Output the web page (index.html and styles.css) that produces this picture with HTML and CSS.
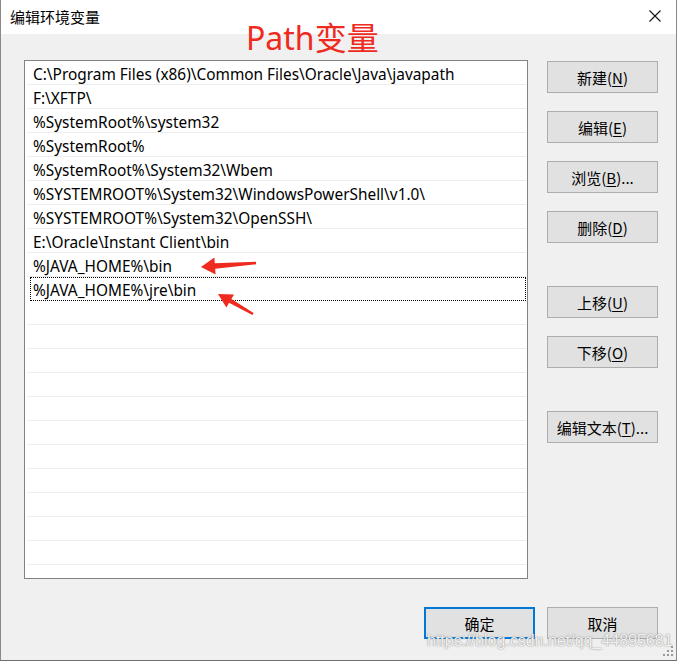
FILE: index.html
```html
<!DOCTYPE html>
<html lang="zh-CN">
<head>
<meta charset="utf-8">
<title>编辑环境变量</title>
<link rel="stylesheet" href="styles.css">
</head>
<body>
<div class="window">
  <div class="titlebar">
    <span class="title">编辑环境变量</span>
    <span class="close" aria-label="关闭">
      <svg width="12" height="12" viewBox="0 0 12 12"><path d="M0.5 0.5 L11.5 11.5 M11.5 0.5 L0.5 11.5" stroke="#111" stroke-width="1.1" fill="none"/></svg>
    </span>
  </div>
  <div class="content">
    <div class="main">
      <div class="listbox">
        <div class="row">C:\Program Files (x86)\Common Files\Oracle\Java\javapath</div>
        <div class="row">F:\XFTP\</div>
        <div class="row">%SystemRoot%\system32</div>
        <div class="row">%SystemRoot%</div>
        <div class="row">%SystemRoot%\System32\Wbem</div>
        <div class="row">%SYSTEMROOT%\System32\WindowsPowerShell\v1.0\</div>
        <div class="row">%SYSTEMROOT%\System32\OpenSSH\</div>
        <div class="row">E:\Oracle\Instant Client\bin</div>
        <div class="row">%JAVA_HOME%\bin</div>
        <div class="row focused">%JAVA_HOME%\jre\bin</div>
        <div class="row"></div>
        <div class="row"></div>
        <div class="row"></div>
        <div class="row"></div>
        <div class="row"></div>
        <div class="row"></div>
        <div class="row"></div>
        <div class="row"></div>
        <div class="row"></div>
        <div class="row"></div>
        <div class="row"></div>
        <div class="row"></div>
      </div>
      <div class="side">
        <button class="btn">新建(<u>N</u>)</button>
        <button class="btn">编辑(<u>E</u>)</button>
        <button class="btn">浏览(<u>B</u>)...</button>
        <button class="btn">删除(<u>D</u>)</button>
        <button class="btn far">上移(<u>U</u>)</button>
        <button class="btn">下移(<u>O</u>)</button>
        <button class="btn far">编辑文本(<u>T</u>)...</button>
      </div>
    </div>
    <div class="footer">
      <button class="btn default">确定</button>
      <button class="btn">取消</button>
    </div>
  </div>

  <div class="annot-title">Path变量</div>
  <svg class="annot-arrows" width="677" height="662" viewBox="0 0 677 662">
    <polygon fill="#ef2a1f" points="200,267 213.4,257.5 213.8,263.3 254.9,261.8 255.1,264.2 214.2,268.7 214.6,274.5"/>
    <polygon fill="#ef2a1f" points="217,294 233,294.5 230.4,299 252.6,313.1 251.4,314.9 228,302.8 225.4,307.5"/>
  </svg>
  <div class="watermark">https://blog.csdn.net/qq_44895681</div>
  <svg class="grip" width="12" height="12" viewBox="0 0 12 12">
    <rect x="8" y="0" width="2" height="2" fill="#9a9a9a"/>
    <rect x="4" y="4" width="2" height="2" fill="#9a9a9a"/>
    <rect x="8" y="4" width="2" height="2" fill="#9a9a9a"/>
    <rect x="0" y="8" width="2" height="2" fill="#9a9a9a"/>
    <rect x="4" y="8" width="2" height="2" fill="#9a9a9a"/>
    <rect x="8" y="8" width="2" height="2" fill="#9a9a9a"/>
  </svg>
</div>
</body>
</html>
```

FILE: styles.css
```css
html, body {
  margin: 0;
  padding: 0;
  background: #ffffff;
}

body {
  font-family: "Noto Sans", "Noto Sans CJK SC", sans-serif;
  color: #000;
}

.window {
  position: relative;
  width: 677px;
  height: 661px;
  box-sizing: border-box;
  border-left: 1px solid #8a8a8a;
  border-right: 1px solid #8a8a8a;
  border-bottom: 1px solid #6f6f6f;
  background: #f0f0f0;
  overflow: hidden;
}

.titlebar {
  height: 34px;
  background: #ffffff;
  display: flex;
  align-items: center;
  justify-content: space-between;
  padding: 0 15px 0 9px;
}

.title {
  font-family: "Noto Sans CJK SC", sans-serif;
  font-size: 15px;
  line-height: 1;
  padding-bottom: 2px;
}

.close {
  display: flex;
  width: 12px;
  height: 12px;
  margin-top: -2px;
}

.content {
  padding: 26px 18px 0 23px;
}

.main {
  display: grid;
  grid-template-columns: 504px 111px;
  column-gap: 19px;
  align-items: start;
}

.listbox {
  height: 519px;
  box-sizing: border-box;
  border: 1px solid #828282;
  background: #ffffff;
  overflow: hidden;
  padding: 0 1px 0 2px;
}

.row {
  height: 24px;
  box-sizing: border-box;
  border-bottom: 1px solid #ededed;
  padding: 4px 0 0 6px;
  font-size: 15.4px;
  line-height: 20px;
  white-space: nowrap;
}

.row.focused {
  outline: 1px dotted #000;
  outline-offset: -1px;
  border-bottom-color: transparent;
  margin-left: 3px;
  padding-left: 3px;
}

.side {
  display: flex;
  flex-direction: column;
  gap: 18px;
  padding-top: 1px;
}

.btn {
  width: 111px;
  height: 32px;
  box-sizing: border-box;
  border: 1px solid #adadad;
  background: #e1e1e1;
  font-family: "Noto Sans CJK SC", sans-serif;
  font-size: 15px;
  color: #000;
  padding: 0;
  line-height: 1;
  display: flex;
  align-items: center;
  justify-content: center;
}

.btn u {
  text-underline-offset: 2px;
}

.btn.far {
  margin-top: 25px;
}

.footer {
  display: flex;
  justify-content: flex-end;
  gap: 12px;
  margin-top: 28px;
}

.btn.default {
  border: 2px solid #0078d7;
  width: 111px;
}

.annot-title {
  position: absolute;
  left: 245px;
  top: 18px;
  font-family: "Noto Sans", "Noto Sans CJK SC", sans-serif;
  font-size: 32px;
  line-height: 40px;
  color: #ef2a1f;
}

.annot-arrows {
  position: absolute;
  left: 0;
  top: 0;
  pointer-events: none;
}

.watermark {
  position: absolute;
  left: 426px;
  top: 632px;
  font-family: "Liberation Sans", sans-serif;
  font-size: 16px;
  color: rgba(255, 255, 255, 0.9);
  text-shadow: 0 0 1px rgba(110, 110, 110, 0.8), 0 0 2px rgba(150, 150, 150, 0.6);
  white-space: nowrap;
}

.grip {
  position: absolute;
  right: 1px;
  bottom: 2px;
}
```
